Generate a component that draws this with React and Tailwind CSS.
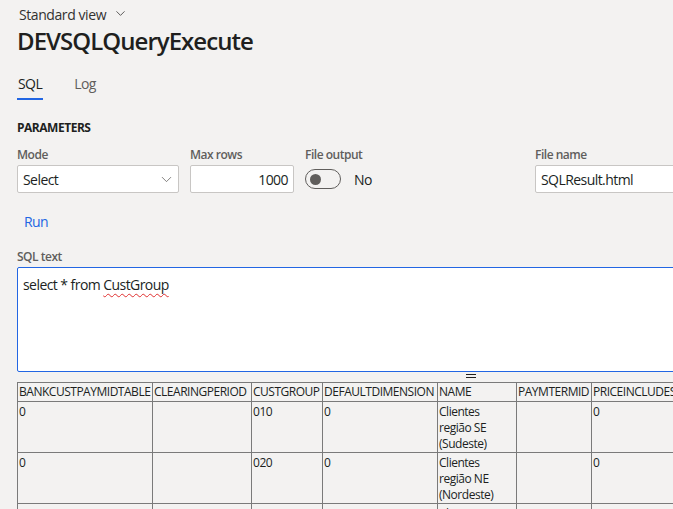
import { ChevronDown } from 'lucide-react'

const COLS = [
  { key: 'bank', label: 'BANKCUSTPAYMIDTABLE', w: 'w-[135px]' },
  { key: 'clear', label: 'CLEARINGPERIOD', w: 'w-[99px]' },
  { key: 'group', label: 'CUSTGROUP', w: 'w-[71px]' },
  { key: 'dim', label: 'DEFAULTDIMENSION', w: 'w-[115px]' },
  { key: 'name', label: 'NAME', w: 'w-[79px]' },
  { key: 'paym', label: 'PAYMTERMID', w: 'w-[75px]' },
  { key: 'price', label: 'PRICEINCLUDESSALESTAX', w: 'w-[140px]' },
]

const ROWS = [
  { bank: '0', clear: '', group: '010', dim: '0', name: ['Clientes', 'região SE', '(Sudeste)'], paym: '', price: '0' },
  { bank: '0', clear: '', group: '020', dim: '0', name: ['Clientes', 'região NE', '(Nordeste)'], paym: '', price: '0' },
  { bank: '', clear: '', group: '', dim: '', name: ['Clientes', 'região S', '(Sul)'], paym: '', price: '' },
]

const label = 'text-[12px] leading-4 font-semibold text-[#605e5c] tracking-[-0.04em]'
const field = 'mt-[2px] h-[28px] bg-white border border-[#c8c6c4] rounded-[2px] flex items-center text-[14px] text-[#201f1e] tracking-[-0.04em]'

export default function App() {
  return (
    <div className="w-[673px] h-[509px] overflow-hidden bg-[#f3f2f1] text-[#323130] font-['Segoe_UI','Open_Sans',sans-serif]">
      <div className="w-[900px]">
        <div className="pl-[19px] pt-[5px] h-[25px] flex items-start gap-[7px] text-[14px] leading-5 tracking-[-0.03em]">
          <span>Standard view</span>
          <ChevronDown size={15} strokeWidth={1.25} className="mt-[1px]" />
        </div>

        <h1 className="pl-[17px] text-[24px] leading-[32px] font-semibold text-[#201f1e] tracking-[-0.04em]">DEVSQLQueryExecute</h1>

        <div className="mt-[17px] pl-[17px] flex gap-[31px] text-[14px] leading-5 tracking-[-0.04em]">
          <div className="pb-[4px] border-b-2 border-[#2266e3] px-[1px] text-[#201f1e]">SQL</div>
          <div className="text-[#605e5c]">Log</div>
        </div>

        <div className="mt-[20px] pl-[17px] text-[12px] leading-4 font-bold text-[#201f1e] tracking-[-0.04em]">PARAMETERS</div>

        <div className="mt-[11px] pl-[17px] flex">
          <div className="w-[162px]">
            <div className={label}>Mode</div>
            <div className={`${field} justify-between pl-[5px] pr-[3px]`}>
              <span>Select</span>
              <ChevronDown size={17} strokeWidth={1.1} className="text-[#605e5c]" />
            </div>
          </div>
          <div className="w-[104px] ml-[11px]">
            <div className={label}>Max rows</div>
            <div className={`${field} justify-end pr-[5px]`}>1000</div>
          </div>
          <div className="w-[230px] ml-[11px]">
            <div className={label}>File output</div>
            <div className="mt-[2px] h-[28px] flex items-center gap-[13px]">
              <div className="w-[36px] h-[20px] rounded-full border border-[#605e5c] flex items-center pl-[4px]">
                <div className="w-[11px] h-[11px] rounded-full bg-[#605e5c]" />
              </div>
              <span className="text-[14px] text-[#201f1e] tracking-[-0.04em]">No</span>
            </div>
          </div>
          <div className="w-[200px]">
            <div className={label}>File name</div>
            <div className={`${field} pl-[5px]`}>SQLResult.html</div>
          </div>
        </div>

        <div className="mt-[19px] pl-[24px] text-[14px] leading-5 text-[#2266e3] tracking-[-0.04em]">Run</div>

        <div className={`mt-[17px] pl-[17px] ${label}`}>SQL text</div>
        <div className="mt-[2px] ml-[17px] w-[760px] h-[105px] bg-white border border-[#2266e3] rounded-[2px] px-[5px] py-[7px] text-[14px] leading-5 text-[#201f1e] tracking-[-0.04em]">
          select * from <span className="underline decoration-wavy decoration-[#e03030] decoration-1 underline-offset-[3px]">CustGroup</span>
        </div>

        <div className="h-[10px] flex justify-start pl-[466px]">
          <div className="mt-[2px] w-[10px] h-[4px] border-t border-b border-[#201f1e]" />
        </div>

        <table className="ml-[17px] w-[714px] table-fixed border-collapse text-[12px] leading-[16px] text-[#201f1e] tracking-[-0.04em]">
          <thead>
            <tr>
              {COLS.map(c => (
                <th key={c.key} className={`${c.w} border border-[#7a7a7a] px-[1px] py-[1px] text-left font-normal whitespace-nowrap overflow-hidden`}>
                  {c.label}
                </th>
              ))}
            </tr>
          </thead>
          <tbody>
            {ROWS.map((r, i) => (
              <tr key={i}>
                {COLS.map(c => (
                  <td key={c.key} className="h-[51px] border border-[#7a7a7a] px-[1px] pt-[2px] pb-0 align-top">
                    {Array.isArray(r[c.key])
                      ? r[c.key].map(line => <div key={line}>{line}</div>)
                      : r[c.key]}
                  </td>
                ))}
              </tr>
            ))}
          </tbody>
        </table>
      </div>
    </div>
  )
}
